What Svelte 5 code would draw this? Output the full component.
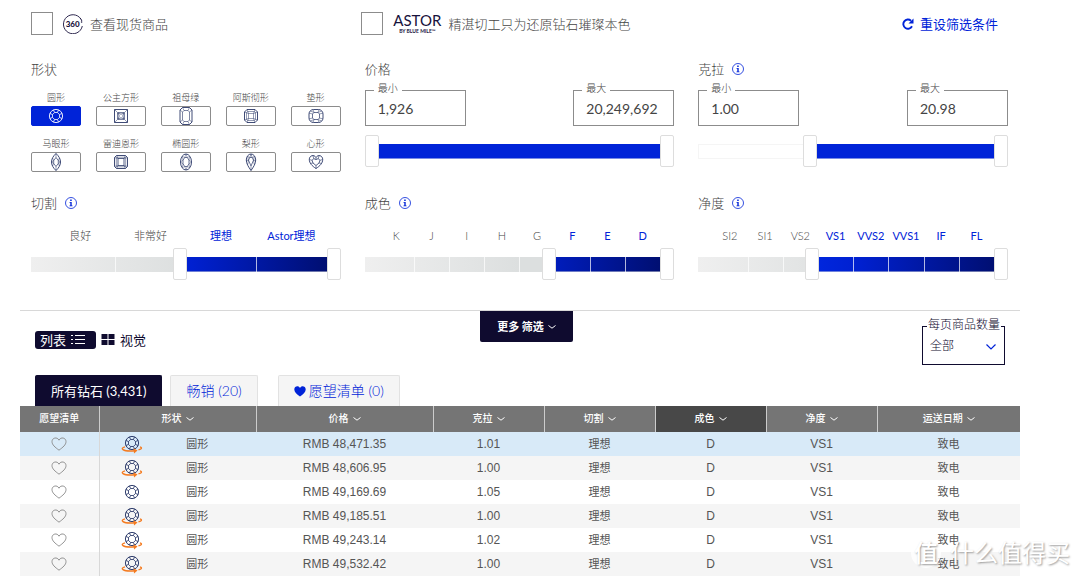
<script lang="ts">
	interface Scale {
		id: string;
		title: string;
		steps: string[];
		low: number;
		high: number;
		firstActive: number;
	}

	const shapes = [
		{ id: 'round', name: '圆形' },
		{ id: 'princess', name: '公主方形' },
		{ id: 'emerald', name: '祖母绿' },
		{ id: 'asscher', name: '阿斯彻形' },
		{ id: 'cushion', name: '垫形' },
		{ id: 'marquise', name: '马眼形' },
		{ id: 'radiant', name: '雷迪恩形' },
		{ id: 'oval', name: '椭圆形' },
		{ id: 'pear', name: '梨形' },
		{ id: 'heart', name: '心形' }
	];

	const ranges = [
		{ id: 'price', title: '价格', info: false, min: '1,926', max: '20,249,692', low: 0, high: 100 },
		{ id: 'carat', title: '克拉', info: true, min: '1.00', max: '20.98', low: 35.5, high: 100 }
	];

	const scales: Scale[] = [
		{
			id: 'cut',
			title: '切割',
			steps: ['良好', '非常好', '理想', 'Astor理想'],
			low: 48,
			high: 100,
			firstActive: 2
		},
		{
			id: 'color',
			title: '成色',
			steps: ['K', 'J', 'I', 'H', 'G', 'F', 'E', 'D'],
			low: 60,
			high: 100,
			firstActive: 5
		},
		{
			id: 'clarity',
			title: '净度',
			steps: ['SI2', 'SI1', 'VS2', 'VS1', 'VVS2', 'VVS1', 'IF', 'FL'],
			low: 36,
			high: 100,
			firstActive: 3
		}
	];

	const columns = ['形状', '价格', '克拉', '切割', '成色', '净度', '运送日期'];

	const diamonds = [
		{ price: 'RMB 48,471.35', carat: '1.01', spin: true },
		{ price: 'RMB 48,606.95', carat: '1.00', spin: true },
		{ price: 'RMB 49,169.69', carat: '1.05', spin: false },
		{ price: 'RMB 49,185.51', carat: '1.00', spin: true },
		{ price: 'RMB 49,243.14', carat: '1.02', spin: true },
		{ price: 'RMB 49,532.42', carat: '1.00', spin: true }
	];

	let selected = $state('round');
	let sorted = $state('成色');
</script>

{#snippet roundCut()}
	<circle cx="10" cy="10" r="6.6" />
	<path d="M8.600 6.500h2.800l2.100 2.100v2.800l-2.100 2.100H8.600l-2.100-2.100V8.600z" stroke-width=".8" />
	<path
		d="M8.600 6.500 7.400 3.900M11.400 6.500l1.200-2.600M13.500 8.600l2.600-1.200M13.500 11.400l2.600 1.200M11.400 13.500l1.200 2.600M8.600 13.500l-1.200 2.600M6.500 11.400l-2.600 1.200M6.500 8.600 3.900 7.400"
		stroke-width=".8"
	/>
{/snippet}

{#snippet shapeIcon(id: string)}
	<svg class="cut" viewBox="0 0 20 20" aria-hidden="true">
		{#if id === 'round'}
			{@render roundCut()}
		{:else if id === 'princess'}
			<path d="M3.5 3.5h13v13h-13zM6.8 6.8h6.4v6.4H6.8z" />
			<path
				d="m3.5 3.5 3.3 3.3m9.7-3.3-3.3 3.3m3.3 9.7-3.3-3.3m-9.7 3.3 3.3-3.3M6.800 6.800 10 8.500l3.200-1.700L11.500 10l1.700 3.200L10 11.500l-3.200 1.700L8.500 10z"
				stroke-width=".5"
			/>
		{:else if id === 'emerald'}
			<path d="M6.5 1.5h7l2.5 2.5v12l-2.5 2.500h-7L4 16V4z" />
			<path d="M8 4.500h4L13.500 6v8L12 15.500H8L6.500 14V6z" stroke-width=".6" />
			<path
				d="M6.500 1.500 8 4.500M13.500 1.500 12 4.500M16 4l-2.500 2M16 16l-2.500-2M13.500 18.500l-1.500-3M6.500 18.500 8 15.500M4 16l2.500-2M4 4l2.500 2"
				stroke-width=".5"
			/>
		{:else if id === 'asscher'}
			<path d="M6 3.500h8L16.500 6v8L14 16.500H6L3.500 14V6z" />
			<path
				d="M6.700 5.500h6.600l1.200 1.200v6.600l-1.200 1.200H6.700l-1.200-1.200V6.700zM6 3.500l1.500 4M14 3.500l-1.500 4M16.500 6l-4 1.500M16.500 14l-4-1.500M14 16.500l-1.500-4M6 16.500l1.500-4M3.500 14l4-1.500M3.500 6l4 1.500M7.500 7.500h5v5h-5z"
				stroke-width=".5"
			/>
		{:else if id === 'cushion'}
			<rect x="3" y="3.500" width="14" height="13" rx="4.500" />
			<path d="M8 6.500h4l1.500 1.500v4L12 13.500H8L6.500 12V8z" stroke-width=".7" />
			<path
				d="M8 6.500 7 3.500M12 6.500l1-3M13.500 8 17 7M13.500 12l3.500 1M12 13.500l1 3M8 13.500l-1 3M6.500 12 3 13M6.500 8 3 7M4.500 5 8 6.500M15.500 5 12 6.500M4.500 15 8 13.500M15.500 15 12 13.500"
				stroke-width=".5"
			/>
		{:else if id === 'marquise'}
			<path d="M10 1.500C16 7 16 13 10 18.500 4 13 4 7 10 1.500z" />
			<path d="m10 5.500 2.300 3v3L10 14.500l-2.300-3v-3z" stroke-width=".7" />
			<path
				d="M10 1.500v4M10 14.500v4M12.300 8.500 13.500 6M12.300 8.500l2.200 1.500-2.200 1.500 1.200 2.500M7.700 8.500 6.500 6M7.700 8.500 5.500 10l2.200 1.500L6.500 14"
				stroke-width=".5"
			/>
		{:else if id === 'radiant'}
			<path d="M5.500 3.500h9l2 2v9l-2 2h-9l-2-2v-9z" />
			<path d="M7 6.500h6v7H7z" stroke-width=".8" />
			<path
				d="M5.500 3.500 7 6.500l-3.500-1M14.500 3.500 13 6.500l3.500-1M16.500 14.500l-3.500-1 1.500 3M3.500 14.500l3.500-1-1.500 3M5.300 5.200h9.400v9.600H5.300z"
				stroke-width=".5"
			/>
		{:else if id === 'oval'}
			<ellipse cx="10" cy="10" rx="5.500" ry="8" />
			<path d="M8.700 5.500h2.600l1.700 2.700v3.600l-1.700 2.700H8.700L7 11.800V8.200z" stroke-width=".7" />
			<path
				d="M8.700 5.500 10 2l1.300 3.500 2.400-1.200L13 8.200l2.500 1.800-2.500 1.800.7 3.900-2.400-1.200L10 18l-1.300-3.500-2.400 1.200.7-3.900L4.500 10 7 8.200l-.7-3.900z"
				stroke-width=".4"
			/>
		{:else if id === 'pear'}
			<path d="M10 18.500C7.500 15 5.300 11.500 5.300 8a4.700 6 0 0 1 9.400 0c0 3.500-2.200 7-4.700 10.500z" />
			<path d="M8.800 5.500h2.400l1.300 2.700L10 14 7.500 8.200z" stroke-width=".7" />
			<path
				d="M8.800 5.500 10 2l1.200 3.500 2.200-1-.9 3.700 2.200.3M10 14v4.500M8.800 5.500l-2.200-1 .9 3.700-2.200.3M12.500 8.200l.8 4.300M7.500 8.200l-.8 4.300"
				stroke-width=".5"
			/>
		{:else}
			<path d="M10 16.500C6 14 3.300 11 3.300 7.500c0-4 4.700-5.500 6.700-2 2-3.500 6.700-2 6.700 2 0 3.500-2.700 6.500-6.700 9z" />
			<path d="m10 7.500 2.200-.8 1.800 1.600-1 2.700-3 2.500L7 11 6 8.300l1.800-1.600z" stroke-width=".8" />
			<path
				d="M10 5.500v2M7.800 6.700 7 4M6 8.300 3.300 7.500M7 11l-2.500.5M10 13.500v3M12.200 6.700 13 4M14 8.300l2.700-.8M13 11l2.500.5"
				stroke-width=".6"
			/>
		{/if}
	</svg>
{/snippet}

{#snippet infoButton(title: string)}
	<button class="info" type="button" aria-label={title}>
		<svg viewBox="0 0 12 12" aria-hidden="true">
			<circle cx="6" cy="6" r="5.500" fill="none" stroke="currentColor" stroke-width=".8" />
			<path d="M5.200 2.500h1.500V4H5.200zM4.500 4.900h2.200v3.500h.8v.9h-3v-.9h.8V5.700h-.8z" fill="currentColor" />
		</svg>
	</button>
{/snippet}

{#snippet chevron()}
	<svg class="chevron" viewBox="0 0 8 4" aria-hidden="true">
		<path d="M.5.500 4 3.200 7.500.500" fill="none" stroke="currentColor" />
	</svg>
{/snippet}

{#snippet slider(title: string, low: number, high: number, kind: string, count: number)}
	<div class="slider {kind}">
		<div class="track"></div>
		<div class="track fill" style="clip-path: inset(0 {100 - high}% 0 {low}%)"></div>
		{#if count}
			<div class="track ticks" style="grid-template-columns: repeat({count}, 1fr)">
				{#each { length: count } as _, i (i)}
					<span></span>
				{/each}
			</div>
		{/if}
		<input type="range" min="0" max="100" step="any" value={low} aria-label="{title} 最小" />
		<input type="range" min="0" max="100" step="any" value={high} aria-label="{title} 最大" />
	</div>
{/snippet}

<main>
	<div class="options">
		<label class="option">
			<input type="checkbox" />
			<svg class="spin-logo" viewBox="0 0 20 20" aria-hidden="true">
				<path
					d="M18.900 7A9.500 9.500 0 1 0 19.300 12M17.200 4.200l.8 1.100"
					fill="none"
					stroke="#17123c"
					stroke-width=".9"
				/>
				<text x="9.700" y="12.700" text-anchor="middle">360</text>
				<circle cx="18.600" cy="8" r=".8" fill="#17123c" />
			</svg>
			<span>查看现货商品</span>
		</label>
		<label class="option">
			<input type="checkbox" />
			<span class="astor">
				<b>ASTOR</b>
				<small>BY BLUE MILE™</small>
			</span>
			<span>精湛切工只为还原钻石璀璨本色</span>
		</label>
		<button class="reset" type="button">
			<svg viewBox="0 0 12 12" aria-hidden="true">
				<path d="M10 8.300A4.600 4.600 0 1 1 9 2.700" fill="none" stroke="currentColor" stroke-width="1.900" />
				<path d="M11.500.500v5H6.500z" fill="currentColor" />
			</svg>
			重设筛选条件
		</button>
	</div>

	<div class="filters">
		<section>
			<h2>形状</h2>
			<div class="shapes">
				{#each shapes as shape (shape.id)}
					<button
						class="shape"
						class:active={selected === shape.id}
						type="button"
						aria-pressed={selected === shape.id}
						onclick={() => (selected = shape.id)}
					>
						<span>{shape.name}</span>
						<span class="box">{@render shapeIcon(shape.id)}</span>
					</button>
				{/each}
			</div>
		</section>

		{#each ranges as range (range.id)}
			<section>
				<h2>
					{range.title}
					{#if range.info}{@render infoButton(range.title)}{/if}
				</h2>
				<div class="bounds">
					<div class="field">
						<label for="{range.id}-min">最小</label>
						<input id="{range.id}-min" type="text" value={range.min} />
					</div>
					<div class="field">
						<label for="{range.id}-max">最大</label>
						<input id="{range.id}-max" type="text" value={range.max} />
					</div>
				</div>
				{@render slider(range.title, range.low, range.high, 'plain', 0)}
			</section>
		{/each}

		{#each scales as scale (scale.id)}
			<section>
				<h2>{scale.title} {@render infoButton(scale.title)}</h2>
				<div class="steps" style="grid-template-columns: repeat({scale.steps.length}, 1fr)">
					{#each scale.steps as step, i (step)}
						<span class:active={i >= scale.firstActive}>{step}</span>
					{/each}
				</div>
				{@render slider(scale.title, scale.low, scale.high, 'graded', scale.steps.length)}
			</section>
		{/each}
	</div>

	<div class="toolbar">
		<div class="views">
			<button class="view active" type="button">
				列表
				<svg viewBox="0 0 14 12" aria-hidden="true">
					<path
						d="M4 1.500h10M4 5.500h10M4 9.500h10M0 1.500h2M0 5.500h2M0 9.500h2"
						stroke="currentColor"
						stroke-width="1.200"
					/>
				</svg>
			</button>
			<button class="view" type="button">
				<svg viewBox="0 0 14 12" aria-hidden="true">
					<path d="M.500 0h6v5h-6zM7.500 0h6v5h-6zM.500 6h6v5h-6zM7.500 6h6v5h-6z" fill="currentColor" />
				</svg>
				视觉
			</button>
		</div>
		<button class="more" type="button">更多 筛选 {@render chevron()}</button>
		<div class="page-size">
			<label for="page-size">每页商品数量</label>
			<select id="page-size">
				<option>全部</option>
			</select>
			<svg viewBox="0 0 10 6" aria-hidden="true">
				<path d="m.500.500 4.500 4.500L9.500.500" fill="none" stroke="#0023d8" stroke-width="1.200" />
			</svg>
		</div>
	</div>

	<div class="tabs">
		<button class="tab active" type="button">所有钻石 (3,431)</button>
		<button class="tab" type="button">畅销 (20)</button>
		<button class="tab wishlist" type="button">
			<svg viewBox="0 0 12 11" aria-hidden="true">
				<path
					d="M6 10.500C2.500 8 .300 6 .300 3.500c0-3.300 4.200-4.300 5.700-1.500 1.500-2.800 5.700-1.800 5.700 1.500C11.700 6 9.500 8 6 10.500z"
					fill="currentColor"
				/>
			</svg>
			愿望清单 (0)
		</button>
	</div>

	<table>
		<colgroup>
			<col class="c-wish" />
			<col class="c-shape" />
			<col class="c-price" />
			<col span="4" class="c-grade" />
			<col />
		</colgroup>
		<thead>
			<tr>
				<th scope="col">愿望清单</th>
				{#each columns as column (column)}
					<th scope="col" class:sorted={sorted === column}>
						<button type="button" onclick={() => (sorted = column)}>
							{column}
							{@render chevron()}
						</button>
					</th>
				{/each}
			</tr>
		</thead>
		<tbody>
			{#each diamonds as diamond (diamond.price)}
				<tr>
					<td>
						<button class="heart" type="button" aria-label="愿望清单">
							<svg viewBox="0 0 16 14" aria-hidden="true">
								<path
									d="M8 13.200C4 10.200 1 7.800 1 4.600 1 .700 6.200-.500 8 3.200 9.800-.500 15 .700 15 4.600c0 3.200-3 5.600-7 8.600z"
									fill="none"
									stroke="#888"
									stroke-width=".9"
								/>
							</svg>
						</button>
					</td>
					<td class="cjk">
						<div class="shape-cell">
							<span>
								<svg class="gem" viewBox="0 0 22 20" aria-hidden="true">
									<g transform="translate(1 {diamond.spin ? -1 : 0})">{@render roundCut()}</g>
									{#if diamond.spin}
										<path
											d="M4 12.800C1.500 13.600.500 14.600 2 15.600c2 1.400 7 1.700 12 1.200M17.500 15.800c2.700-.6 4.200-1.700 1.500-3"
											stroke="#f47b20"
											stroke-width="1.400"
										/>
										<path d="m12.500 14.200 4 2.400-3.500 2.900z" fill="#f47b20" stroke="none" />
									{/if}
								</svg>
							</span>
							<span>圆形</span>
						</div>
					</td>
					<td>{diamond.price}</td>
					<td>{diamond.carat}</td>
					<td class="cjk">理想</td>
					<td>D</td>
					<td>VS1</td>
					<td class="cjk">致电</td>
				</tr>
			{/each}
		</tbody>
	</table>

	<div class="watermark"><b>值</b><span>什么值得买</span></div>
</main>

<style>
	:global(body) {
		margin: 0;
		background: #fff;
	}

	main {
		--blue: #0023d8;
		--navy: #0f0b2f;
		--line: #8c8c8c;

		position: relative;
		padding: 12px 60px 0 20px;
		font-family: Lato, 'Noto Sans CJK SC', sans-serif;
		font-size: 13px;
		font-weight: 300;
		line-height: 20px;
		color: #444;
		overflow: hidden;
	}

	button,
	input,
	select {
		font: inherit;
		color: inherit;
		margin: 0;
		padding: 0;
		border: 0;
		background: none;
		border-radius: 0;
	}

	button {
		cursor: pointer;
	}

	svg {
		display: block;
		flex: none;
	}

	.options {
		display: grid;
		grid-template-columns: repeat(3, 1fr);
		gap: 14px;
		padding: 0 12px 0 11px;
	}

	.option {
		display: flex;
		align-items: center;
		gap: 7px;
	}

	.option input {
		appearance: none;
		box-sizing: border-box;
		width: 22px;
		height: 23px;
		border: 1px solid var(--line);
	}

	.option .spin-logo {
		width: 20px;
		height: 20px;
		margin-left: 3px;
	}

	.spin-logo text {
		font: 900 8px Lato, sans-serif;
		fill: #17123c;
	}

	.astor {
		display: grid;
		justify-items: center;
		color: #17123c;
		margin-left: 3px;
	}

	.astor b {
		font-size: 15px;
		font-weight: 400;
		line-height: 15px;
	}

	.astor small {
		font-size: 5px;
		font-weight: 700;
		line-height: 6px;
	}

	.reset {
		display: flex;
		align-items: center;
		justify-self: end;
		gap: 6px;
		margin-right: 10px;
		color: var(--blue);
		font-weight: 400;
	}

	.reset svg {
		width: 12px;
		height: 12px;
	}

	.filters {
		display: grid;
		grid-template-columns: repeat(3, 1fr);
		gap: 21px 24px;
		padding: 24px 12px 30px 11px;
	}

	h2 {
		display: flex;
		align-items: center;
		gap: 8px;
		margin: 0;
		font-size: 13px;
		font-weight: 300;
	}

	.info {
		width: 12px;
		color: var(--blue);
	}

	.shapes {
		display: grid;
		grid-template-columns: repeat(5, 50px);
		justify-content: space-between;
		row-gap: 10px;
		margin-top: 11px;
	}

	.shape {
		display: grid;
		font-size: 9px;
		line-height: 16px;
		white-space: nowrap;
	}

	.box {
		display: flex;
		justify-content: center;
		align-items: center;
		box-sizing: border-box;
		height: 20px;
		border: 1px solid var(--line);
		border-radius: 2px;
		color: #2a3868;
	}

	.active .box {
		background: var(--blue);
		border-color: var(--blue);
		color: #fff;
	}

	.cut,
	.gem {
		height: 20px;
		fill: none;
		stroke: currentColor;
		stroke-width: 0.9;
	}

	.bounds {
		display: flex;
		justify-content: space-between;
		margin: 11px 0 9px;
	}

	.field {
		position: relative;
		box-sizing: border-box;
		width: 101px;
		height: 36px;
		border: 1px solid var(--line);
	}

	.field label {
		position: absolute;
		top: -10px;
		left: 8px;
		padding: 0 4px;
		background: #fff;
		font-size: 10px;
		line-height: 14px;
	}

	.field input {
		box-sizing: border-box;
		width: 100%;
		height: 34px;
		padding-left: 12px;
		font-size: 14px;
		font-weight: 400;
	}

	.steps {
		display: grid;
		margin: 15px 0 4px;
		padding: 0 14px;
		font-size: 11px;
		line-height: 16px;
		text-align: center;
		white-space: nowrap;
		color: #444;
	}

	.steps .active {
		color: var(--blue);
		font-weight: 400;
	}

	.slider {
		display: grid;
		align-items: center;
		height: 32px;
	}

	/* tracks and both range inputs share one cell */
	.slider > * {
		grid-area: 1 / 1;
		box-sizing: border-box;
		min-width: 0;
	}

	.track {
		height: 15px;
		border: 1px solid #f5f5f5;
	}

	.fill {
		border: 0;
		background: var(--blue);
	}

	.graded .track {
		border: 0;
		background: linear-gradient(to right, #efefef, #dcdfdf 50%);
	}

	.graded .fill {
		background: linear-gradient(to right, #002ff0 20%, #0020d0 52%, #000d68);
	}

	.graded .ticks {
		display: grid;
		padding: 0 14px;
		background: none;
		z-index: 1;
	}

	.ticks span + span {
		border-left: 1px solid rgba(255, 255, 255, 0.7);
	}

	.slider input {
		appearance: none;
		z-index: 2;
		width: 100%;
		height: 32px;
		pointer-events: none;
	}

	.slider input::-webkit-slider-thumb {
		appearance: none;
		box-sizing: border-box;
		width: 14px;
		height: 32px;
		border: 1px solid #ddd;
		border-radius: 2px;
		background: #fff;
		pointer-events: auto;
	}

	.toolbar {
		display: grid;
		grid-template-columns: 1fr auto 1fr;
		align-items: start;
		box-sizing: border-box;
		height: 65px;
		padding-left: 13px;
		border-top: 1px solid #d8d8d8;
		color: var(--navy);
	}

	.views {
		display: flex;
		gap: 5px;
		padding: 20px 0 0 2px;
	}

	.view {
		display: flex;
		align-items: center;
		gap: 5px;
		height: 18px;
		font-weight: 400;
	}

	.view svg {
		width: 14px;
		height: 12px;
	}

	.view.active {
		padding: 0 11px 0 5px;
		border-radius: 3px;
		background: var(--navy);
		color: #fff;
	}

	.more {
		display: flex;
		justify-content: center;
		align-items: center;
		gap: 4px;
		width: 93px;
		height: 31px;
		border-radius: 0 0 2px 2px;
		background: var(--navy);
		color: #fff;
		font-size: 11px;
		font-weight: 700;
	}

	.chevron {
		width: 8px;
		height: 4px;
	}

	.page-size {
		position: relative;
		justify-self: end;
		box-sizing: border-box;
		width: 83px;
		height: 39px;
		margin: 15px 15px 0 0;
		border: 1px solid var(--navy);
		font-size: 12px;
		font-weight: 300;
	}

	.page-size label {
		position: absolute;
		top: -10px;
		left: 4px;
		padding: 0 1px;
		background: #fff;
		font-size: 12px;
		line-height: 16px;
		white-space: nowrap;
	}

	.page-size select {
		appearance: none;
		width: 100%;
		height: 37px;
		padding-left: 7px;
	}

	.page-size svg {
		position: absolute;
		top: 17px;
		right: 8px;
		width: 10px;
		pointer-events: none;
	}

	.tabs {
		display: flex;
		gap: 8px;
		padding-left: 15px;
	}

	.tab {
		display: flex;
		align-items: center;
		gap: 3px;
		box-sizing: border-box;
		height: 31px;
		padding: 0 15px;
		border: 1px solid #e2e2e2;
		border-bottom: 0;
		border-radius: 2px 2px 0 0;
		background: #f5f5f5;
		color: var(--blue);
		font-size: 14px;
		font-weight: 300;
	}

	.tab.active {
		border-color: var(--navy);
		background: var(--navy);
		color: #fff;
		font-size: 13px;
		font-weight: 400;
	}

	.wishlist {
		margin-left: 12px;
	}

	.wishlist svg {
		width: 12px;
	}

	table {
		width: 100%;
		table-layout: fixed;
		border-collapse: collapse;
		font-family: 'Liberation Sans', 'Noto Sans CJK SC', sans-serif;
		font-size: 12px;
		font-weight: 400;
		text-align: center;
		color: #555;
	}

	.c-wish {
		width: 7.9%;
	}

	.c-shape {
		width: 15.7%;
	}

	.c-price {
		width: 17.7%;
	}

	.c-grade {
		width: 11.1%;
	}

	th {
		height: 26px;
		padding: 0;
		background: #757575;
		color: #fff;
		font-size: 10px;
		font-weight: 500;
		line-height: 16px;
	}

	th + th {
		border-left: 1px solid #ccc;
	}

	th.sorted {
		background: #484848;
	}

	th button {
		display: flex;
		justify-content: center;
		align-items: center;
		gap: 4px;
		width: 100%;
	}

	td {
		height: 24px;
		padding: 0;
		line-height: 20px;
	}

	td:first-child {
		border-right: 1px solid #d8d8d8;
	}

	tbody tr:nth-child(even) {
		background: #f5f5f5;
	}

	tbody tr:first-child {
		background: #d8eaf8;
	}

	.cjk {
		font-size: 11px;
	}

	.heart {
		display: block;
		width: 16px;
		margin: 0 auto;
	}

	.shape-cell {
		display: grid;
		grid-template-columns: 42% 41%;
		align-items: center;
		justify-items: center;
	}

	.gem {
		width: 22px;
		color: #1b2a5e;
	}

	.watermark {
		position: absolute;
		right: 10px;
		bottom: 8px;
		display: flex;
		align-items: center;
		gap: 9px;
		font-size: 24px;
		font-weight: 400;
		line-height: 30px;
		color: #fff;
		text-shadow: 1px 1px 2px #999;
		pointer-events: none;
	}

	.watermark b {
		width: 30px;
		border-radius: 50%;
		background: rgba(255, 255, 255, 0.8);
		font-weight: 500;
		text-align: center;
	}
</style>
